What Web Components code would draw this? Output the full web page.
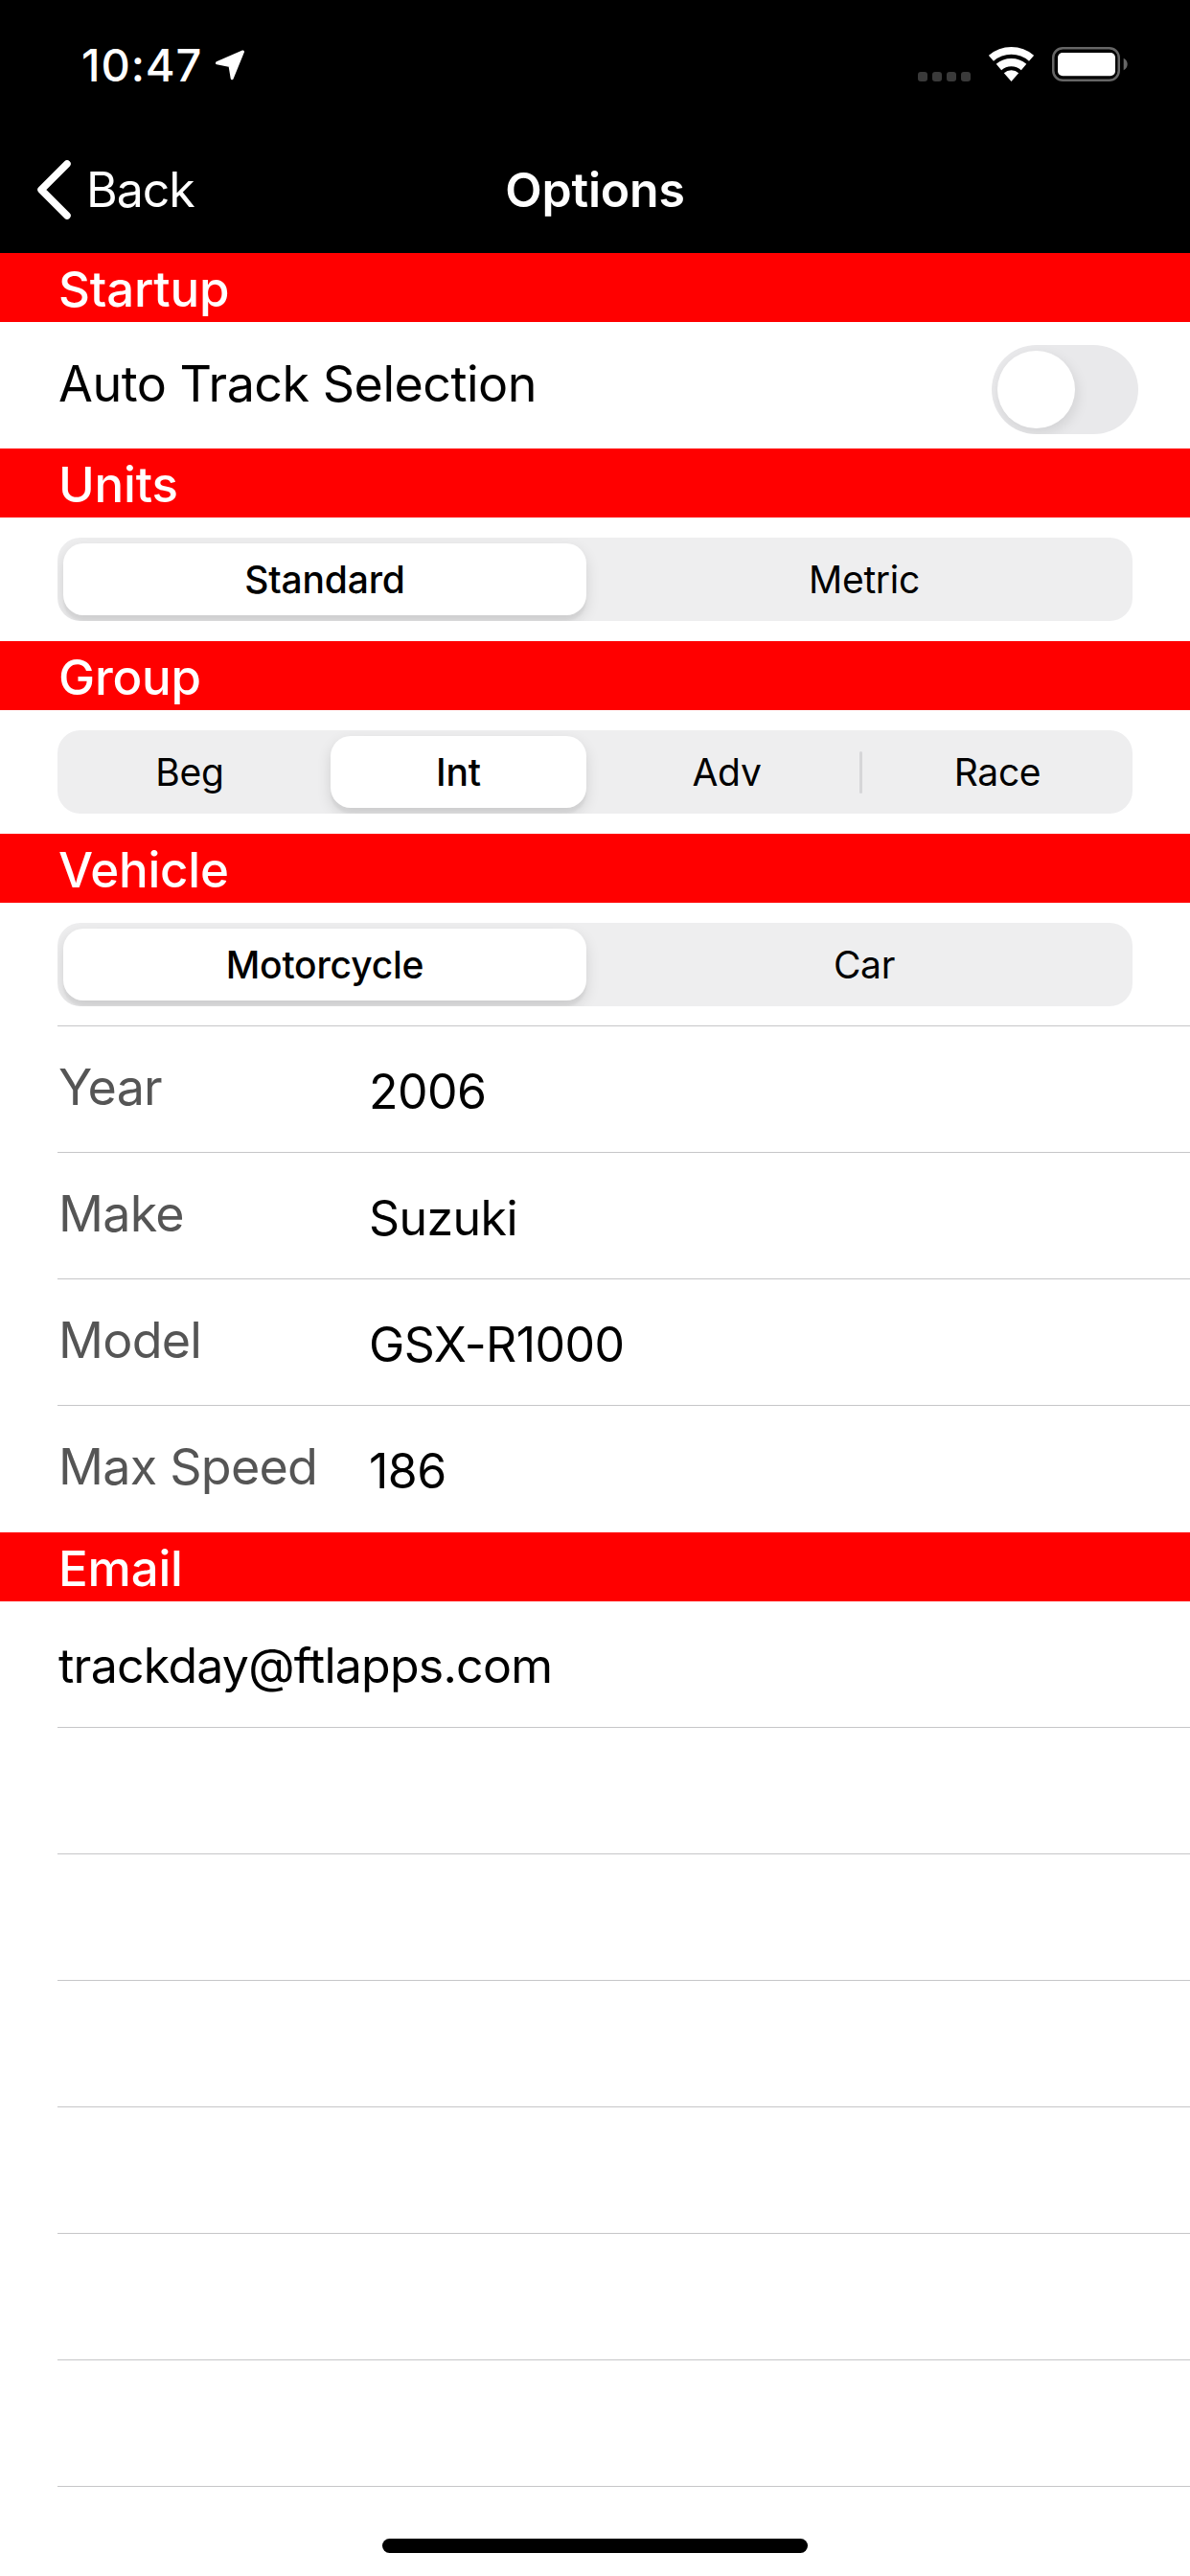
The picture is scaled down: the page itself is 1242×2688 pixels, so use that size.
<!DOCTYPE html>
<html>
<head>
<meta charset="utf-8">
<title>Options</title>
<style>
  html, body { margin: 0; background: #fff; }
  body {
    width: 1242px; height: 2688px; overflow: hidden; position: relative;
    font-family: Inter, "Liberation Sans", sans-serif; color: #000;
  }
  main { display: flex; flex-direction: column; }
</style>
</head>
<body>
<main>
  <status-bar time="10:47"></status-bar>
  <nav-bar back="Back" title="Options"></nav-bar>

  <section-header>Startup</section-header>
  <switch-row>Auto Track Selection</switch-row>

  <section-header>Units</section-header>
  <seg-row columns="546px 1fr">
    <seg-item selected>Standard</seg-item>
    <seg-item style="margin-left:10px">Metric</seg-item>
  </seg-row>

  <section-header>Group</section-header>
  <seg-row columns="264px 282px 285px 3px 1fr">
    <seg-item>Beg</seg-item>
    <seg-item selected style="margin-left:15px">Int</seg-item>
    <seg-item style="margin-left:8px">Adv</seg-item>
    <seg-divider></seg-divider>
    <seg-item>Race</seg-item>
  </seg-row>

  <section-header>Vehicle</section-header>
  <seg-row columns="546px 1fr" separated>
    <seg-item selected>Motorcycle</seg-item>
    <seg-item style="margin-left:10px">Car</seg-item>
  </seg-row>

  <field-row label="Year" value="2006"></field-row>
  <field-row label="Make" value="Suzuki"></field-row>
  <field-row label="Model" value="GSX-R1000"></field-row>
  <field-row label="Max Speed" value="186" last></field-row>

  <section-header>Email</section-header>
  <field-row value="trackday@ftlapps.com"></field-row>
  <field-row></field-row>
  <field-row></field-row>
  <field-row></field-row>
  <field-row></field-row>
  <field-row></field-row>
  <field-row></field-row>
</main>
<home-indicator></home-indicator>

<script>
'use strict';

// small helper: every element gets an open shadow root from a string
class Base extends HTMLElement {
    constructor() {
        super();
        this.attachShadow({ mode: 'open' });
    }
    render(html) { this.shadowRoot.innerHTML = html; }
}

class StatusBar extends Base {
    connectedCallback() {
        this.render(`<style>
            :host { display: block; height: 132px; background: #000; color: #fff; box-sizing: border-box; }
            .bar { display: flex; align-items: flex-start; height: 100%; padding: 49px 0 0 85px; box-sizing: border-box; }
            .time { font-size: 47px; font-weight: 500; line-height: 37px; letter-spacing: .9px; width: 140px; }
            .arrow { width: 32px; height: 32px; margin-top: 3px; }
            .right { margin-left: auto; display: flex; align-items: flex-start; margin-right: 65px; }
            .dots { display: flex; gap: 5px; margin-top: 26px; margin-right: 19px; }
            .dots i { width: 10px; height: 10px; border-radius: 3px; background: #3a3a3a; }
            .wifi { width: 47px; height: 37px; margin-right: 19px; }
            .batt { width: 79px; height: 37px; }
        </style>
        <div class="bar">
            <span class="time">${this.getAttribute('time')}</span>
            <svg class="arrow" viewBox="0 0 32 32"><path fill="#fff" stroke="#fff" stroke-width="3" stroke-linejoin="round" d="M28.5 2 L17.2 29.8 L15 16.5 L1.5 13.7 Z"/></svg>
            <div class="right">
                <div class="dots"><i></i><i></i><i></i><i></i></div>
                <svg class="wifi" viewBox="0 0 47 37">
                    <path fill="none" stroke="#fff" stroke-width="7.8" d="M2.44 11.8 A 32.1 32.1 0 0 1 44.56 11.8"/>
                    <path fill="none" stroke="#fff" stroke-width="8.3" d="M10.44 21 A 19.9 19.9 0 0 1 36.56 21"/>
                    <path fill="#fff" d="M15.82 27.17 A 11.7 11.7 0 0 1 31.18 27.17 L23.5 36 Z"/>
                </svg>
                <svg class="batt" viewBox="0 0 79 37">
                    <rect x="1.25" y="1.25" width="68.5" height="33.5" rx="10" fill="none" stroke="#666" stroke-width="2.5"/>
                    <rect x="6" y="6" width="60" height="24.3" rx="5" fill="#fff"/>
                    <path fill="#666" d="M74.7 11.7 C77.5 13 78.7 15.5 78.7 18 C78.7 20.5 77.5 23 74.7 24.3 Z"/>
                </svg>
            </div>
        </div>`);
    }
}

class NavBar extends Base {
    connectedCallback() {
        this.render(`<style>
            :host { display: block; height: 132px; background: #000; color: #fff; }
            .bar { display: grid; grid-template-columns: 1fr auto 1fr; align-items: center; height: 100%; font-size: 50px; line-height: 60px; }
            .back { display: flex; align-items: center; gap: 16px; padding-left: 38px; letter-spacing: -1px; }
            .back svg { width: 36px; height: 62px; }
            .title { font-weight: 600; letter-spacing: -.2px; }
        </style>
        <div class="bar">
            <div class="back">
                <svg viewBox="0 0 36 62"><path fill="none" stroke="#fff" stroke-width="7.5" stroke-linecap="round" stroke-linejoin="round" d="M32 4 L5 31 L32 58"/></svg>
                <span>${this.getAttribute('back')}</span>
            </div>
            <div class="title">${this.getAttribute('title')}</div>
            <div></div>
        </div>`);
    }
}

class SectionHeader extends Base {
    connectedCallback() {
        this.render(`<style>
            :host { display: block; height: 72px; background: #f00; color: #fff; }
            div { padding-left: 61px; font-size: 51px; font-weight: 500; line-height: 76px; height: 72px; letter-spacing: -.2px; }
        </style><div><slot></slot></div>`);
    }
}

class SwitchRow extends Base {
    connectedCallback() {
        this.render(`<style>
            :host { display: block; height: 132px; background: #fff; }
            .row { display: flex; align-items: center; justify-content: space-between; height: 100%; padding: 0 54px 0 61px; font-size: 52px; letter-spacing: -.5px; }
            .row span { margin-top: -4px; }
            .track { width: 153px; height: 93px; border-radius: 47px; background: #e9e9eb; padding: 6px; box-sizing: border-box; margin-top: 8px; overflow: hidden; }
            .knob { width: 81px; height: 81px; border-radius: 50%; background: #fff; box-shadow: 2px 5px 14px rgba(0,0,0,.1); }
        </style>
        <div class="row"><span><slot></slot></span><div class="track"><div class="knob"></div></div></div>`);
    }
}

class SegRow extends Base {
    connectedCallback() {
        const sep = this.hasAttribute('separated');
        this.render(`<style>
            :host { display: block; height: 129px; box-sizing: border-box; padding: 21px 60px 0; position: relative; }
            .track {
                display: grid; grid-template-columns: ${this.getAttribute('columns')};
                height: 87px; box-sizing: border-box; padding: 6px 0 6px 6px;
                background: #eeeeef; border-radius: 24px; overflow: hidden;
            }
            .line { position: absolute; left: 60px; right: 0; bottom: 0; height: 1px; background: #c6c6c8; }
        </style>
        <div class="track"><slot></slot></div>${sep ? '<div class="line"></div>' : ''}`);
    }
}

class SegItem extends Base {
    connectedCallback() {
        this.render(`<style>
            :host { display: flex; align-items: center; justify-content: center; height: 75px; font-size: 39px; letter-spacing: -.3px; border-radius: 21px; }
            :host([selected]) {
                background: #fff; font-weight: 500; letter-spacing: -.2px;
                box-shadow: 0 6px 15px rgba(0,0,0,.12), 0 6px 2px rgba(0,0,0,.04);
            }
        </style><slot></slot>`);
    }
}

class SegDivider extends Base {
    connectedCallback() {
        this.render(`<style>
            :host { display: block; width: 3px; height: 44px; align-self: center; background: #d6d6d8; border-radius: 1.5px; }
        </style>`);
    }
}

class FieldRow extends Base {
    connectedCallback() {
        const label = this.getAttribute('label');
        const value = this.getAttribute('value');
        this.render(`<style>
            :host { display: block; height: 132px; flex: none; }
            .row { display: flex; align-items: center; height: 131px; margin-left: 60px; border-bottom: 1px solid #c6c6c8; font-size: 50px; letter-spacing: -.75px; }
            :host([last]) .row { border-bottom-color: transparent; }
            .label { width: 325px; color: #555; font-size: 52px; padding-left: 1px; box-sizing: border-box; margin-top: -4px; }
            .value { padding-top: 4px; letter-spacing: -.55px; }
            .value.solo { padding-top: 2px; padding-left: 1px; letter-spacing: -.75px; }
        </style>
        <div class="row">
            ${label ? `<span class="label">${label}</span>` : ''}
            ${value ? `<span class="value${label ? '' : ' solo'}">${value}</span>` : ''}
        </div>`);
    }
}

class HomeIndicator extends Base {
    connectedCallback() {
        this.render(`<style>
            :host { display: block; position: absolute; left: 399px; top: 2649px; width: 444px; height: 15px; border-radius: 8px; background: #000; }
        </style>`);
    }
}

customElements.define('status-bar', StatusBar);
customElements.define('nav-bar', NavBar);
customElements.define('section-header', SectionHeader);
customElements.define('switch-row', SwitchRow);
customElements.define('seg-row', SegRow);
customElements.define('seg-item', SegItem);
customElements.define('seg-divider', SegDivider);
customElements.define('field-row', FieldRow);
customElements.define('home-indicator', HomeIndicator);
</script>
</body>
</html>
